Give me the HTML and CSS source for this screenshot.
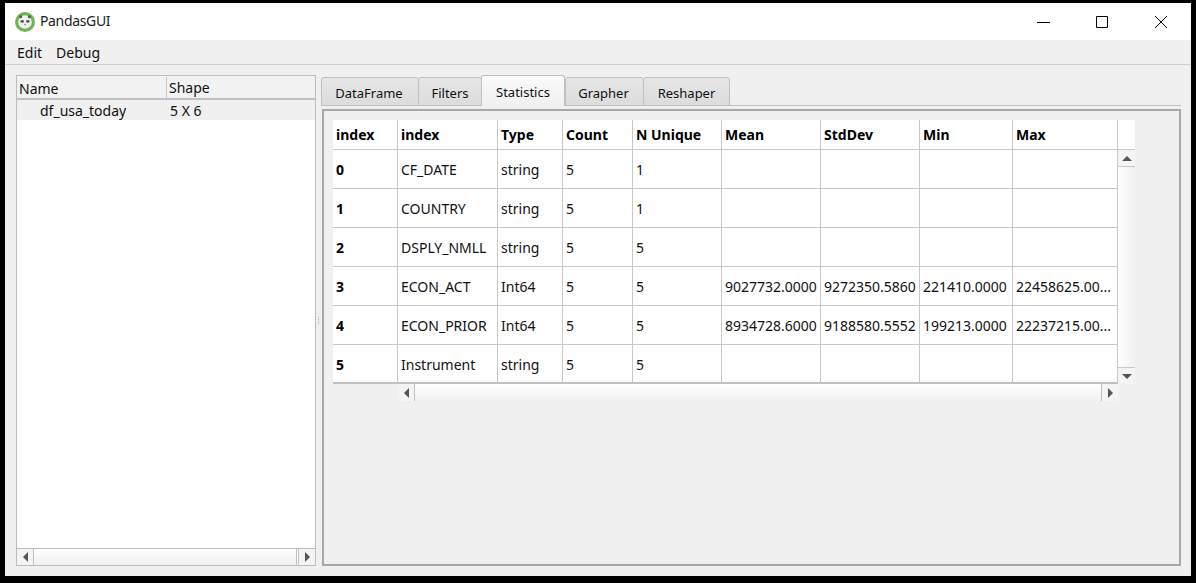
FILE: index.html
```html
<!doctype html>
<html>
<head>
<meta charset="utf-8">
<title>PandasGUI</title>
<link rel="stylesheet" href="styles.css">
</head>
<body>
<div class="window">

	<div class="titlebar">
		<svg class="logo" viewBox="0 0 20 20">
			<circle cx="10" cy="10" r="10" fill="#6fb552"/>
			<circle cx="10" cy="10" r="6.8" fill="#f0f0f0"/>
			<circle cx="5.6" cy="4.8" r="1.5" fill="#555"/>
			<circle cx="14.4" cy="4.8" r="1.5" fill="#555"/>
			<ellipse cx="7.2" cy="9.4" rx="1.8" ry="1.3" fill="#555"/>
			<ellipse cx="12.8" cy="9.4" rx="1.8" ry="1.3" fill="#555"/>
			<circle cx="10" cy="12.6" r="0.9" fill="#888"/>
		</svg>
		<span class="title">PandasGUI</span>
		<div class="winbtns">
			<svg class="winbtn" viewBox="0 0 59 20"><path d="M23 10.5h13" stroke="#000" fill="none"/></svg>
			<svg class="winbtn" viewBox="0 0 59 20"><path d="M23.5 4.5h11v11h-11z" stroke="#000" fill="none"/></svg>
			<svg class="winbtn" viewBox="0 0 59 20"><path d="M23 4l12 12M35 4l-12 12" stroke="#000" fill="none"/></svg>
		</div>
	</div>

	<div class="menubar">
		<span>Edit</span>
		<span>Debug</span>
	</div>

	<div class="main">

		<div class="tree">
			<div class="tree-head">
				<div class="tree-col1">Name</div>
				<div class="tree-col2">Shape</div>
			</div>
			<div class="tree-row">
				<div class="tree-col1 indent">df_usa_today</div>
				<div class="tree-col2">5 X 6</div>
			</div>
			<div class="tree-space"></div>
			<div class="hbar tree-bar">
				<div class="sbtn bor-r"><i class="arrow a-left"></i></div>
				<div class="track track-end"></div>
				<div class="sbtn bor-l"><i class="arrow a-right"></i></div>
			</div>
		</div>

		<div class="splitter"><i></i><i></i><i></i><i></i></div>

		<div class="right">
			<div class="tabs">
				<div class="tab t-first">DataFrame</div>
				<div class="tab t-filters">Filters</div>
				<div class="tab active">Statistics</div>
				<div class="tab t-grapher">Grapher</div>
				<div class="tab t-reshaper">Reshaper</div>
			</div>
			<div class="pane">
				<div class="frame">
					<div class="grid-wrap">
						<div class="grid-top">
							<table class="grid">
								<colgroup>
									<col class="c0"><col class="c1"><col class="c2"><col class="c3"><col class="c4">
									<col class="c5"><col class="c6"><col class="c7"><col class="c8">
								</colgroup>
								<tr class="head">
									<th>index</th><th>index</th><th>Type</th><th>Count</th><th>N Unique</th>
									<th>Mean</th><th>StdDev</th><th>Min</th><th>Max</th>
								</tr>
								<tr><th>0</th><td>CF_DATE</td><td>string</td><td>5</td><td>1</td><td></td><td></td><td></td><td></td></tr>
								<tr><th>1</th><td>COUNTRY</td><td>string</td><td>5</td><td>1</td><td></td><td></td><td></td><td></td></tr>
								<tr><th>2</th><td>DSPLY_NMLL</td><td>string</td><td>5</td><td>5</td><td></td><td></td><td></td><td></td></tr>
								<tr><th>3</th><td>ECON_ACT</td><td>Int64</td><td>5</td><td>5</td><td>9027732.0000</td><td>9272350.5860</td><td>221410.0000</td><td>22458625.00...</td></tr>
								<tr><th>4</th><td>ECON_PRIOR</td><td>Int64</td><td>5</td><td>5</td><td>8934728.6000</td><td>9188580.5552</td><td>199213.0000</td><td>22237215.00...</td></tr>
								<tr><th>5</th><td>Instrument</td><td>string</td><td>5</td><td>5</td><td></td><td></td><td></td><td></td></tr>
							</table>
							<div class="vside">
								<div class="corner"></div>
								<div class="vbar">
									<div class="sbtn bor-b"><i class="arrow a-up"></i></div>
									<div class="track"></div>
									<div class="sbtn bor-t"><i class="arrow a-down"></i></div>
								</div>
							</div>
						</div>
						<div class="hbar grid-bar">
							<div class="sbtn bor-r"><i class="arrow a-left"></i></div>
							<div class="track"></div>
							<div class="sbtn bor-l"><i class="arrow a-right"></i></div>
						</div>
					</div>
				</div>
			</div>
		</div>

	</div>
</div>
</body>
</html>
```

FILE: styles.css
```css
*{margin:0; padding:0; box-sizing:border-box;}
html,body{height:583px; overflow:hidden;}
body{
	background:#000;
	padding:3px 5px 7px 5px;
	font-family:"Noto Sans","Open Sans",sans-serif;
	font-size:14px;
	color:#111;
}

.window{
	height:573px;
	background:#f0f0f0;
	display:flex; flex-direction:column;
}

.titlebar{
	height:37px; background:#fff;
	display:flex; align-items:center;
	padding-left:10px;
}
.logo{width:20px; height:20px; margin-right:5px;}
.title{font-size:14px; letter-spacing:-0.35px; color:#222; padding-bottom:2px;}
.winbtns{margin-left:auto; display:flex;}
.winbtn{width:59px; height:20px; display:block;}

.menubar{
	height:25px;
	border-bottom:1px solid #d0d0d0;
	display:flex; gap:14px;
	padding:1px 0 0 12px;
	align-items:center;
	line-height:20px;
}

.main{
	flex:1; display:flex; min-height:0;
	padding:10px 10px 10px 11px;
}

.tree{
	width:300px;
	background:#fff;
	border:1px solid #bdbdbd;
	display:flex; flex-direction:column;
}
.tree-head{
	height:24px; display:flex; align-items:center;
	background:#f2f2f2;
	border-bottom:2px solid #c0c0c0;
	padding-top:1px;
}
.tree-head .tree-col1{border-right:1px solid #c8c8c8; height:100%; line-height:23px;}
.tree-row{height:20px; display:flex; align-items:center; background:#f0f0f0;}
.tree-col1{width:150px; padding-left:2px;}
.tree-col2{padding-left:2px;}
.tree-row .tree-col2{padding-left:3px;}
.indent{padding-left:23px;}
.tree-space{flex:1;}

.hbar{display:flex; height:17px;}
.tree-bar{border-top:1px solid #bdbdbd;}
.sbtn{
	width:17px; flex:none;
	display:flex; align-items:center; justify-content:center;
	background:#f4f4f4;
}
.track{flex:1; background:linear-gradient(#fff,#f0f0f0);}
.track-end{border-right:1px solid #c0c0c0; margin-right:1px;}
.vbar .track{background:linear-gradient(to right,#fff,#f0f0f0);}
.bor-r{border-right:1px solid #c0c0c0;}
.bor-l{border-left:1px solid #c0c0c0;}
.bor-t{border-top:1px solid #c8c8c8;}
.bor-b{border-bottom:1px solid #c8c8c8;}

.arrow{display:block; width:0; height:0; border:4px solid transparent;}
.a-left{border-left-width:0; border-right:5px solid #555; border-top-width:5px; border-bottom-width:5px;}
.a-right{border-right-width:0; border-left:5px solid #555; border-top-width:5px; border-bottom-width:5px;}
.a-up{border-top-width:0; border-bottom:5px solid #555; border-left-width:5px; border-right-width:5px;}
.a-down{border-bottom-width:0; border-top:5px solid #555; border-left-width:5px; border-right-width:5px;}

.splitter{
	width:5px;
	display:flex; flex-direction:column; justify-content:center; align-items:center; gap:1px;
}
.splitter i{display:block; width:1px; height:1px; background:#b4b4b4;}

.right{flex:1; display:flex; flex-direction:column; min-width:0;}

.tabs{display:flex; align-items:flex-end; height:31px; flex:none; margin-bottom:-1px; position:relative; z-index:1; font-size:13px;}
.tab{
	height:29px; width:98px;
	background:linear-gradient(#e6e6e6,#dcdcdc);
	border:1px solid #c0c0c0;
	border-radius:3px 3px 0 0;
	margin-right:-1px;
	text-align:center; line-height:30px;
}
.t-first{padding-right:2px;}
.t-filters{width:64px;}
.t-grapher{width:79px; margin-left:1px; padding-right:2px;}
.t-reshaper{width:87px;}
.tab.active{
	width:84px; height:31px;
	background:linear-gradient(#fbfbfb,#f0f0f0);
	border-bottom:0;
	line-height:32px;
}

.pane{
	flex:1; min-height:0;
	border-top:1px solid #c0c0c0;
	padding:3px 0 0 1px;
}
.frame{
	height:100%;
	border:2px solid #a8a8a8;
	padding:9px 0 0 9px;
}

.grid-wrap{width:802px;}
.grid-top{display:flex;}
.grid{
	width:785px; table-layout:fixed;
	border-collapse:separate; border-spacing:0;
	background:#fff;
}
.c0{width:65px;} .c1{width:100px;} .c2{width:65px;} .c3{width:70px;} .c4{width:89px;}
.c5{width:99px;} .c6{width:99px;} .c7{width:93px;} .c8{width:105px;}
.grid th,.grid td{
	height:39px; padding:0 3px;
	border-right:1px solid #c8c8c8; border-bottom:1px solid #c8c8c8;
	text-align:left; white-space:nowrap; overflow:hidden;
}
.grid th{font-weight:700; color:#000;}
.grid .head th{height:30px;}
.grid tr:last-child th,.grid tr:last-child td{border-bottom:2px solid #c0c0c0; padding-top:1px;}

.vside{width:17px; display:flex; flex-direction:column;}
.corner{height:30px; background:#fff; border-bottom:1px solid #c8c8c8;}
.vbar{flex:1; display:flex; flex-direction:column;}
.vbar .sbtn{width:17px; height:17px;}

.grid-bar{margin-left:65px; width:720px;}
```
